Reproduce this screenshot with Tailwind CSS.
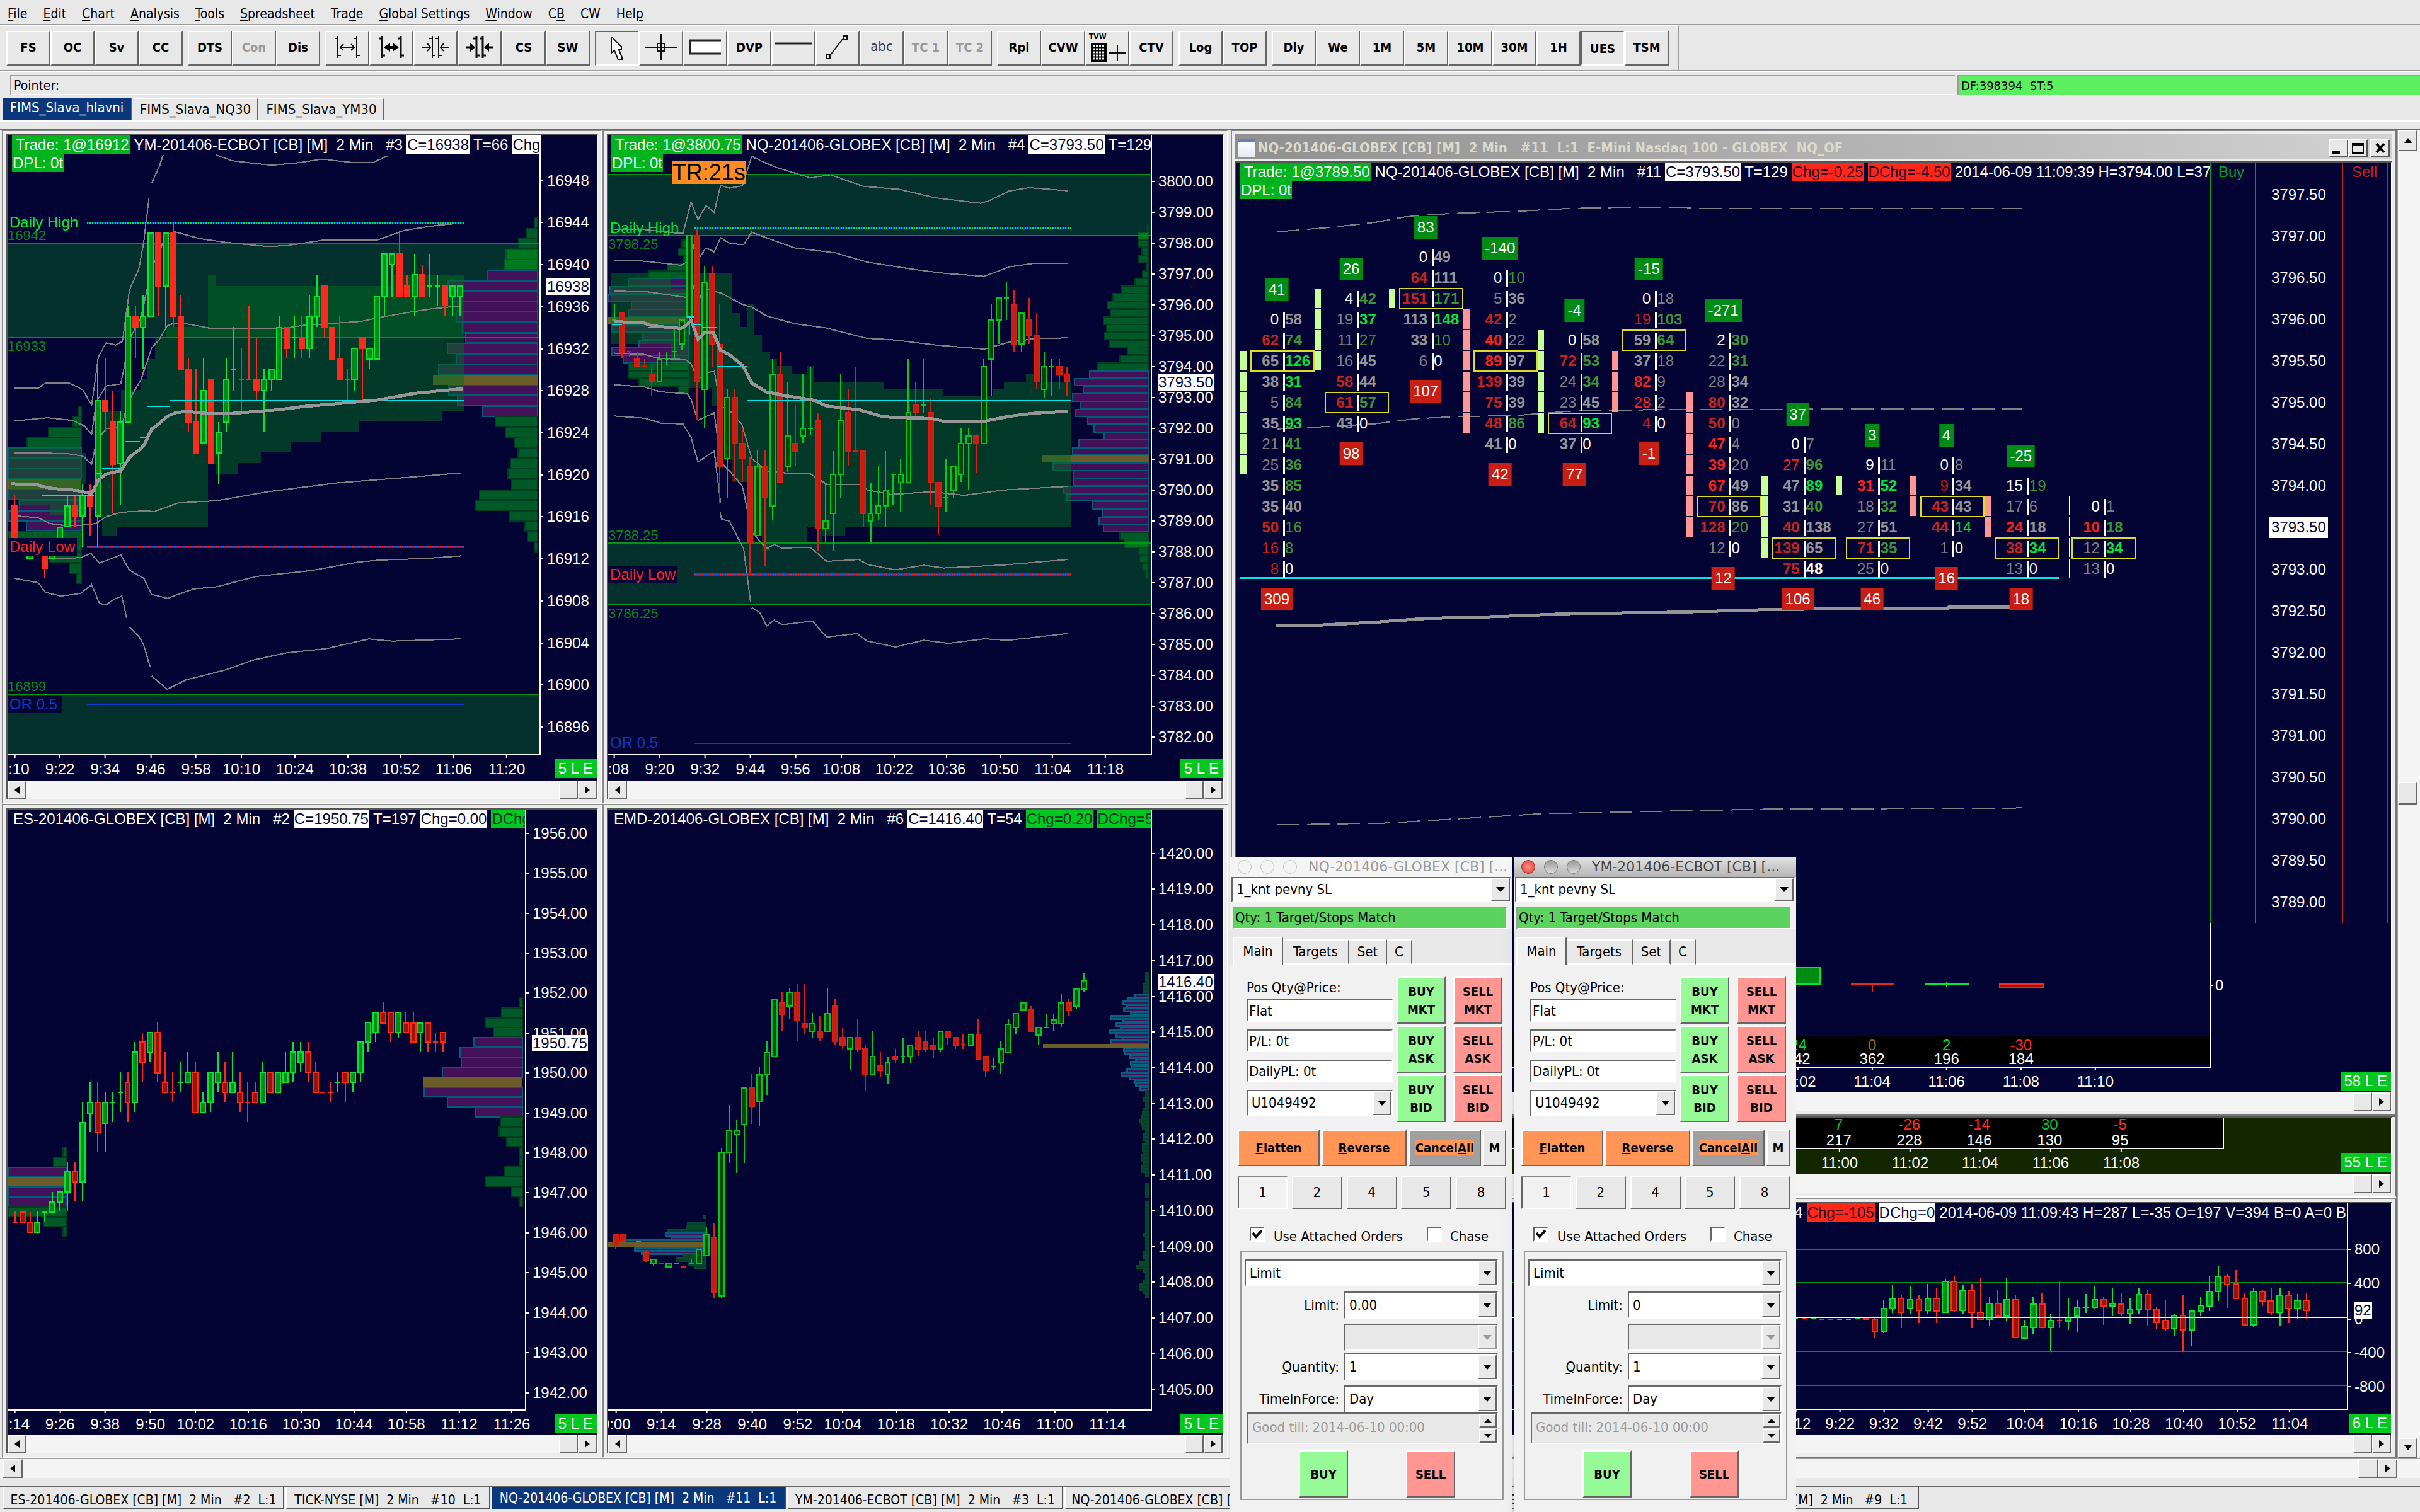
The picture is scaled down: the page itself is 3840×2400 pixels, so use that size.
<!DOCTYPE html>
<html lang="en">
<head>
  <meta charset="UTF-8">
  <meta name="viewport" content="width=device-width, initial-scale=1.0">
  <title>FIMS_Slava_hlavni</title>
  <script src="https://cdn.jsdelivr.net/npm/@tailwindcss/browser@4"></script>
</head>
<body class="relative flex min-h-screen flex-col overflow-x-hidden bg-[#e8e8e8] font-['DejaVu_Sans_Condensed','DejaVu_Sans',sans-serif] text-[22px] leading-none text-black">

  <nav class="flex h-[38px] items-center gap-[25px] px-3 pt-[6px] text-[21px]">
    <a href="#"><u>F</u>ile</a>
    <a href="#"><u>E</u>dit</a>
    <a href="#"><u>C</u>hart</a>
    <a href="#"><u>A</u>nalysis</a>
    <a href="#"><u>T</u>ools</a>
    <a href="#"><u>S</u>preadsheet</a>
    <a href="#">Tra<u>d</u>e</a>
    <a href="#"><u>G</u>lobal Settings</a>
    <a href="#"><u>W</u>indow</a>
    <a href="#">C<u>B</u></a>
    <a href="#">CW</a>
    <a href="#">Hel<u>p</u></a>
  </nav>

  <div class="border-t-2 border-b-2 border-t-[#9c9c9c] border-b-[#9c9c9c]">
    <div id="toolbar" class="flex h-[71px] w-[2664px] items-center gap-2 border-t-2 border-r-2 border-t-white border-r-[#9c9c9c] pl-[10px]"></div>
  </div>

  <div class="flex gap-1 border-t-2 border-white pt-1 pl-4">
    <div class="flex h-[32px] w-[3086px] items-center border-t-2 border-l-2 border-b-2 border-t-[#9c9c9c] border-l-[#9c9c9c] border-b-white pt-[2px] pl-1 text-[21px]">Pointer:</div>
    <div class="flex h-[32px] flex-1 items-center border-t-2 border-l-2 border-t-[#9c9c9c] border-l-[#9c9c9c] bg-[#5cf060] pl-1 text-[20px]">DF:398394&nbsp; ST:5</div>
  </div>

  <div class="mt-1 flex h-[38px] gap-[2px] border-b-2 border-white pl-1">
    <button class="w-[206px] border-r-2 border-[#666] bg-[#0b387c] pb-1 text-[22px] text-white">FIMS_Slava_hlavni</button>
    <button class="w-[198px] border-t-2 border-r-2 border-t-white border-r-[#666] text-[22px]">FIMS_Slava_NQ30</button>
    <button class="w-[198px] border-t-2 border-r-2 border-t-white border-r-[#666] text-[22px]">FIMS_Slava_YM30</button>
  </div>

  <main class="mt-[11px] grid flex-1 grid-cols-[953fr_993fr_1854fr_37fr] border-t-2 border-[#6a6a6a] pl-[3px] font-['Liberation_Sans',Arial,sans-serif] text-2xl leading-none text-white">
    <div class="grid grid-rows-[1071fr_1038fr]">
      <section id="ym" class="flex min-h-0 flex-col border-2 border-t-[#8a8a8a] border-l-[#8a8a8a] border-r-white border-b-white bg-[#ececec] p-[5px]"></section>
      <section id="es" class="flex min-h-0 flex-col border-2 border-t-[#8a8a8a] border-l-[#8a8a8a] border-r-white border-b-white bg-[#ececec] p-[5px]"></section>
    </div>
    <div class="grid grid-rows-[1071fr_1038fr]">
      <section id="nq" class="flex min-h-0 flex-col border-2 border-t-[#8a8a8a] border-l-[#8a8a8a] border-r-white border-b-white bg-[#ececec] p-[5px]"></section>
      <section id="emd" class="flex min-h-0 flex-col border-2 border-t-[#8a8a8a] border-l-[#8a8a8a] border-r-white border-b-white bg-[#ececec] p-[5px]"></section>
    </div>
    <div class="grid grid-rows-[1566fr_130fr_413fr] pl-1">
      <section id="flow" class="flex min-h-0 flex-col border-2 border-t-[#8a8a8a] border-l-[#8a8a8a] border-r-[#777] border-b-[#777] bg-[#ececec] p-[5px]">
        <header class="mb-[3px] flex h-[40px] shrink-0 items-center bg-linear-to-r from-[#909090] to-[#d2d2d2] pt-1 pr-1 pl-1 font-['DejaVu_Sans_Condensed','DejaVu_Sans',sans-serif] text-[22px] text-[#dcdacd]">
          <span class="mr-1 h-7 w-7 border-t-4 border-[#5f86b8] bg-linear-to-b from-white to-[#e4e8ee]"></span>
          <h2 class="flex-1 font-bold whitespace-pre">NQ-201406-GLOBEX [CB] [M]  2 Min   #11  L:1  E-Mini Nasdaq 100 - GLOBEX  NQ_OF</h2>
          <button aria-label="Minimize" class="flex h-[29px] w-[31px] items-end border-2 border-t-white border-l-white border-r-[#555] border-b-[#555] bg-[#e8e8e8] p-1"><span class="h-1 w-3 bg-black"></span></button>
          <button aria-label="Maximize" class="h-[29px] w-[31px] border-2 border-t-white border-l-white border-r-[#555] border-b-[#555] bg-[#e8e8e8] p-1"><span class="block h-full border-2 border-t-4 border-black"></span></button>
          <button aria-label="Close" class="ml-1 flex h-[29px] w-[31px] items-center justify-center border-2 border-t-white border-l-white border-r-[#555] border-b-[#555] bg-[#e8e8e8]"><svg class="h-4 w-4" viewBox="0 0 16 16"><path d="M2 1 L14 15 M14 1 L2 15" stroke="#000" stroke-width="4"/></svg></button>
        </header>
      </section>
      <section id="nq30" class="flex min-h-0 flex-col border-2 border-t-[#555] border-l-[#8a8a8a] border-r-[#777] border-b-white bg-[#ececec] p-[5px] pt-0"></section>
      <section id="tick" class="flex min-h-0 flex-col border-2 border-t-[#8a8a8a] border-l-[#8a8a8a] border-r-[#777] border-b-[#777] bg-[#ececec] p-[5px]"></section>
    </div>
    <div class="flex flex-col border-l-2 border-[#9c9c9c] bg-[#f4f4f4] pr-1">
      <button aria-label="Scroll up" class="flex h-[34px] items-center justify-center border-2 border-t-white border-l-white border-r-[#666] border-b-[#666] bg-[#e8e8e8]"><svg class="h-2 w-3" viewBox="0 0 12 8"><path d="M0 8 L6 0 L12 8 Z"/></svg></button>
      <div class="flex-[1000]"></div>
      <button aria-label="Scroll thumb" class="h-[36px] border-2 border-t-white border-l-white border-r-[#666] border-b-[#666] bg-[#e8e8e8]"></button>
      <div class="flex-[1005]"></div>
      <button aria-label="Scroll down" class="flex h-[32px] items-center justify-center border-2 border-t-white border-l-white border-r-[#666] border-b-[#666] bg-[#e8e8e8]"><svg class="h-2 w-3" viewBox="0 0 12 8"><path d="M0 0 L6 8 L12 0 Z"/></svg></button>
    </div>
  </main>

  <div class="flex h-[32px] border-t-2 border-[#9c9c9c] bg-[#f4f4f4] pl-1">
    <button aria-label="Scroll left" class="flex w-[32px] items-center justify-center border-2 border-t-white border-l-white border-r-[#666] border-b-[#666] bg-[#e8e8e8]"><svg class="h-3 w-2" viewBox="0 0 8 12"><path d="M8 0 L0 6 L8 12 Z"/></svg></button>
    <div class="flex-1"></div>
    <button aria-label="Scroll thumb" class="w-[31px] border-2 border-t-white border-l-white border-r-[#666] border-b-[#666] bg-[#e8e8e8]"></button>
    <button aria-label="Scroll right" class="mr-[36px] flex w-[31px] items-center justify-center border-2 border-t-white border-l-white border-r-[#666] border-b-[#666] bg-[#e8e8e8]"><svg class="h-3 w-2" viewBox="0 0 8 12"><path d="M0 0 L8 6 L0 12 Z"/></svg></button>
  </div>

  <footer class="mt-3 flex h-[42px] gap-[2px] border-t-2 border-[#666] pb-1 pl-1 text-[21px] whitespace-pre">
    <button class="w-[447px] border-r-2 border-b-2 border-l-2 border-l-white border-r-[#555] border-b-[#555] pt-2">ES-201406-GLOBEX [CB] [M]  2 Min   #2  L:1</button>
    <button class="w-[325px] border-r-2 border-b-2 border-l-2 border-l-white border-r-[#555] border-b-[#555] pt-2">TICK-NYSE [M]  2 Min   #10  L:1</button>
    <button class="w-[467px] border-r-2 border-[#555] bg-[#0b387c] text-white">NQ-201406-GLOBEX [CB] [M]  2 Min   #11  L:1</button>
    <button class="w-[438px] border-r-2 border-b-2 border-l-2 border-l-white border-r-[#555] border-b-[#555] pt-2">YM-201406-ECBOT [CB] [M]  2 Min   #3  L:1</button>
    <button class="w-[450px] border-r-2 border-b-2 border-l-2 border-l-white border-r-[#555] border-b-[#555] pt-2">NQ-201406-GLOBEX [CB] [M]  2 Min   #4  L:1</button>
    <button class="w-[582px] border-r-2 border-b-2 border-l-2 border-l-white border-r-[#555] border-b-[#555] pt-2">EMD-201406-GLOBEX [CB] [M]  2 Min   #6  L:1</button>
    <button class="w-[320px] border-r-2 border-b-2 border-l-2 border-l-white border-r-[#555] border-b-[#555] pt-2">TICK-NYSE [M]  2 Min   #9  L:1</button>
  </footer>

  <!-- Floating order entry windows -->
  <div id="orders" class="absolute bottom-0 left-[1952px] flex h-[1040px] gap-[2px] overflow-hidden"></div>

  <script>
    // ---------- toolbar ----------
    const icons = {
      wide: '<path d="M6 3V38M1 7H6M6 34H11M36 3V38M31 7H36M36 34H41M10 21H32M15 16L10 21L15 26M27 16L32 21L27 26" fill="none" stroke="#111" stroke-width="2"/>',
      wideBold: '<path d="M6 3V38M1 7H6M6 34H11M36 3V38M31 7H36M36 34H41" fill="none" stroke="#111" stroke-width="3"/><path d="M12 21H30" stroke="#000" stroke-width="4"/><path d="M9 21L19 14V28ZM33 21L23 14V28Z"/>',
      narrow: '<path d="M16 3V38M11 7H16M16 34H21M26 3V38M21 7H26M26 34H31M0 21H12M8 15L13 21L8 27M42 21H30M34 15L29 21L34 27" fill="none" stroke="#111" stroke-width="2"/>',
      narrowBold: '<path d="M16 3V38M11 7H16M16 34H21M26 3V38M21 7H26M26 34H31" fill="none" stroke="#111" stroke-width="3"/><path d="M0 21H8M34 21H42" stroke="#000" stroke-width="3"/><path d="M14 21L6 14V28ZM28 21L36 14V28Z"/>',
      pointer: '<path d="M12 3V28L17 24L23 39H29V35L24 23H28V18L14 4Z" fill="#fff" stroke="#111" stroke-width="2"/>',
      cross: '<path d="M21 0V42M-5 21H47M15 15H27V27H15Z" fill="none" stroke="#111" stroke-width="2"/>',
      box: '<path d="M46 10H-3V31H46Z" fill="#fff"/><path d="M46 10H-3V31H46" fill="none" stroke="#222" stroke-width="3"/>',
      line: '<path d="M-9 15H50" stroke="#222" stroke-width="3"/>',
      ray: '<path d="M9 34L29 8M30 3H36V9H30ZM3 33H9V39H3Z" fill="none" stroke="#111" stroke-width="2"/>',
      tpo: '<path d="M-5 10H21V40H-5Z"/><path d="M-2 15H18M-2 20H18M-2 25H18M-2 30H18M-2 35H18" stroke="#e8e8e8" stroke-width="3" stroke-dasharray="3 2"/><path d="M24 26H50M37 13V39" stroke="#111" stroke-width="2"/>'
    };
    const groups = [
      ['FS', 'OC', 'Sv', 'CC'],
      ['DTS', '-Con', 'Dis'],
      ['@wide', '@wideBold', '@narrow', '@narrowBold', 'CS', 'SW'],
      ['!@pointer', '@cross', '@box', 'DVP', '@line', '@ray', '~abc', '-TC 1', '-TC 2'],
      ['Rpl', 'CVW', '@tpo', 'CTV'],
      ['Log', 'TOP'],
      ['Dly', 'We', '1M', '5M', '10M', '30M', '1H', '!UES', 'TSM']
    ];
    const raised = 'flex h-[55px] w-[70px] flex-col items-center justify-center border-2 border-t-white border-l-white border-r-[#666] border-b-[#666] pb-1 text-xl font-bold';
    const pressed = 'flex h-[55px] w-[70px] flex-col items-center justify-center border-2 border-t-[#666] border-l-[#666] border-r-white border-b-white text-xl font-bold';

    document.getElementById('toolbar').innerHTML = groups.map(g => '<div class="flex">' + g.map(b => {
      const down = b[0] === '!';
      const t = b.replace('!', '');
      let inner;
      if (t[0] === '@') {
        const name = t.slice(1);
        inner = (name === 'tpo' ? '<span class="-mb-2 self-start pl-1 text-xs">TVW</span>' : '') +
          `<svg class="h-[42px] w-[42px] overflow-visible" viewBox="0 0 42 42">${icons[name]}</svg>`;
        return `<button aria-label="${name}" class="${down ? pressed : raised}">${inner}</button>`;
      }
      if (t[0] === '-') inner = `<span class="text-[#999]">${t.slice(1)}</span>`;
      else if (t[0] === '~') inner = `<span class="text-[22px] font-normal text-[#3c3850]">${t.slice(1)}</span>`;
      else inner = t;
      return `<button class="${down ? pressed : raised}">${inner}</button>`;
    }).join('') + '</div>').join('');

    // ---------- chart helpers ----------
    const left = (v, x) => ((x - v[0]) / v[2] * 100).toFixed(3) + '%';
    const top_ = (v, y) => ((y - v[1]) / v[3] * 100).toFixed(3) + '%';

    // each candle: side high bodyTop bodyBottom low
    function candles(x0, step, w, data, c) {
      return data.trim().split(/\s*,\s*/).map((row, i) => {
        const [side, h, a, b, l] = row.split(' ');
        const x = x0 + i * step;
        const [stroke, fill] = side === 'g' ? [c.up, c.upFill] : [c.down, c.downFill];
        const body = a === b
          ? `<path d="M${x - w / 2} ${a}H${x + w / 2}"/>`
          : `<rect x="${x - w / 2}" y="${a}" width="${w}" height="${b - a}"/>`;
        return `<g stroke="${stroke}" fill="${fill}"><path d="M${x} ${h}V${l}"/>${body}</g>`;
      }).join('');
    }

    const bars = {
      g: 'fill="#005a28" stroke="#003c20"', b: 'fill="#007820" stroke="#005a20"',
      p: 'fill="#43105a" stroke="#005c78"', o: 'fill="#6b5c2a"',
      d: 'fill="#04402a" stroke="#034a2a"', s: 'fill="#43105a" stroke="#046080" stroke-width="3"'
    };
    // volume profile: rows run downwards from y, each ends at the right edge
    function profile(right, y, h, rows) {
      return rows.trim().split(' ').map((r, i) => {
        if (r === '-') return '';
        const x = +r.slice(1);
        return `<rect x="${x}" y="${y + i * h}" width="${right - x}" height="${h - 1}" ${bars[r[0]]}/>`;
      }).join('');
    }
    const curve = (...pts) => pts.map(p => `<polyline points="${p}" fill="none" stroke="#808080"/>`).join('');
    const vwap = p => `<polyline points="${p}" fill="none" stroke="#969696" stroke-width="5"/>`;
    const zone = (v, y, h) => `<rect x="${v[0]}" y="${y}" width="${v[2]}" height="${h}" fill="#04302e"/>`;
    const hline = (v, y, col) => `<path d="M${v[0]} ${y}H${v[0] + v[2]}" stroke="${col}"/>`;
    const cyan = segs => segs.map(s => `<path d="M${s[0]} ${s[2]}H${s[1]}" stroke="#00e6e6"/>`).join('');
    const daily = (x1, x2, y, dot) => `<path d="M${x1} ${y}H${x2}" stroke="#0a46dc" stroke-width="4"/><path d="M${x1} ${y + 1}H${x2}" stroke="${dot}" stroke-dasharray="2 2"/>`;

    const svg = (v, inner) => `<svg class="absolute inset-0 h-full w-full [&_*]:[vector-effect:non-scaling-stroke]" viewBox="${v.join(' ')}" preserveAspectRatio="none" stroke-width="2" shape-rendering="crispEdges">${inner}</svg>`;
    const note = (v, x, y, cls, t) => `<span class="absolute -translate-y-1/2 whitespace-pre ${cls}" style="left:${left(v, x)};top:${top_(v, y)}">${t}</span>`;

    const tag = {
      trade: 'bg-[#00b41e] pl-[6px] pr-px mr-px', white: 'bg-white px-px text-[#040434]', red: 'bg-[#ff2818] px-px text-[#28001e]',
      green: 'bg-[#00c81e] px-px text-[#00321e]', plain: ''
    };
    const heading = items => '<div class="flex h-[29px] items-center gap-[6px] whitespace-pre">' +
      items.map(([k, t]) => `<span class="flex h-[29px] shrink-0 items-center ${tag[k]}">${t}</span>`).join('') + '</div>';

    const priceLabels = (v, list) => list.map(([y, t]) =>
      `<div class="absolute left-0 flex -translate-y-1/2 items-center gap-[6px]" style="top:${top_(v, y)}"><span class="h-[2px] w-1 bg-white"></span>${t}</div>`).join('');
    const scale = (hi, lo, step, y1, y2, dec) => {
      const out = [];
      for (let p = hi; p >= lo; p -= step) out.push([y1 + (hi - p) / (hi - lo) * (y2 - y1), p.toFixed(dec)]);
      return out;
    };
    const timeLabels = (v, list) => list.map(([x, t]) =>
      `<div class="absolute top-0 flex -translate-x-1/2 flex-col items-center gap-[6px]" style="left:${left(v, x)}"><span class="h-1 w-[2px] bg-white"></span>${t}</div>`).join('');

    const scrollbar = `
      <div class="flex h-[30px] shrink-0 bg-[#f4f4f4]">
        <button aria-label="Scroll left" class="flex w-[30px] items-center justify-center border-2 border-t-white border-l-white border-r-[#666] border-b-[#666] bg-[#e8e8e8]"><svg class="h-3 w-2" viewBox="0 0 8 12"><path d="M8 0 L0 6 L8 12 Z"/></svg></button>
        <div class="flex-1"></div>
        <button aria-label="Scroll thumb" class="w-[30px] border-2 border-t-white border-l-white border-r-[#666] border-b-[#666] bg-[#e8e8e8]"></button>
        <button aria-label="Scroll right" class="flex w-[30px] items-center justify-center border-2 border-t-white border-l-white border-r-[#666] border-b-[#666] bg-[#e8e8e8]"><svg class="h-3 w-2" viewBox="0 0 8 12"><path d="M0 0 L8 6 L0 12 Z"/></svg></button>
      </div>`;

    function mount(id, o) {
      const v = o.view;
      document.getElementById(id).insertAdjacentHTML('beforeend', `
        <div class="flex min-h-0 flex-1 flex-col border-2 border-t-[#555] border-l-[#555] border-r-white border-b-0">
          <div class="grid min-h-0 flex-1 overflow-hidden ${o.cols} ${o.bg || 'bg-[#040434]'}">
            <div class="relative overflow-hidden border-b-2 border-white ${o.noRight ? '' : 'border-r-2'}">
              ${svg(v, o.draw)}
              ${o.notes || ''}
              <div class="relative ${o.headPad || 'pl-[7px]'}">${o.head || ''}</div>
            </div>
            <div class="relative">${o.axis || priceLabels(v, o.prices)}
              ${o.last ? `<span class="absolute left-[9px] -translate-y-1/2 bg-white px-px py-px text-[#040434]" style="top:${top_(v, o.last[0])}">${o.last[1]}</span>` : ''}
            </div>
            <div class="relative">${timeLabels(v, o.times)}</div>
            <div class="flex items-start justify-end pt-[6px]"><span class="flex h-[30px] items-center bg-[#00c81e] px-[6px]">${o.badge}</span></div>
          </div>
          ${scrollbar}
        </div>`);
    }

    // ---------- YM ----------
    const ymView = [22, 33, 1366, 1388];
    mount('ym', {
      view: ymView, cols: 'grid-cols-[1fr_89px] grid-rows-[1fr_40px]', badge: '5 L E',
      head: heading([['trade', 'Trade: 1@16912'], ['plain', 'YM-201406-ECBOT [CB] [M]  2 Min   #3'], ['white', 'C=16938'], ['plain', 'T=66'], ['white', 'Chg=6']]) +
        heading([['trade', '<span class="-ml-[5px]">DPL: 0t</span>']]),
      draw: zone(ymView, 275, 212) + zone(ymView, 1286, 140) +
        profile(1383, 218, 23.45, 'g1375 g1356 g1334 b1302 b1297 p1255 p1154 p1160 p1178 p1175 p1191 p1199 p1152 p1175 p1129 o1115 p1155 p1178 p1242 g1275 g1301 g1323 g1333 g1314 g1307 g1317 g1234 g1223 g1311 g1350 g1358 g1375') +
        profile(212, 640, 23.45, 'g205 g190 g128 g72 p24 p24 p24 o24 p24 p52 p24 p70 g24 g110 g130 g180 g198') +
        '<path fill="#006e1e" fill-opacity=".5" d="M30 720H212V815H225V745H212V720ZM26 733H212V885H130V862H50V850H26ZM265 932V650H313V604H363V580H381V534H400V487H430V462H537V345H556V370H1010V345H1196V650H1138V675H925V698H828V720H750V743H672V768H614V791H556V770H537V910H304V932Z"/>' +
        hline(ymView, 275, '#00960f') + hline(ymView, 487, '#00960f') + hline(ymView, 1286, '#00960f') +
        curve('40,600 100,600 120,588 180,588 215,603 238,638 255,530 275,498 300,503 317,495 335,380 360,330 372,270 385,175', '392,140 413,100 422,76', '556,76 600,90 700,100 770,94 830,86 900,93 960,94 1000,78',
          '40,673 125,666 190,672 220,685 238,703 250,630 275,595 313,590 335,490 365,440 392,330 410,295 432,255 450,249 520,265 585,273 690,282 740,280 830,268 970,268 1040,246 1130,234 1185,230',
          '40,745 170,746 215,752 238,770 250,720 275,690 313,688 335,625 365,580 392,510 412,490 432,460 450,454 480,455 540,465 600,467 720,467 780,459 930,450 985,440 1050,430 1110,422 1185,415',
          '40,886 100,890 130,903 170,908 215,907 250,903 275,888 313,878 370,875 400,876 460,857 560,852 690,832 870,812 1060,799 1185,790',
          '120,982 210,980 236,970 258,992 313,974 335,1008 372,1026 392,1062 432,1071 500,1050 560,1045 660,1022 800,1009 920,990 980,985 1090,982 1185,976',
          '40,1026 100,1036 120,1058 160,1066 210,1060 238,1040 258,1082 275,1086 295,1073 315,1066 328,1115', '335,1135 360,1157 372,1176 388,1225', '392,1245 432,1275 480,1254 580,1232 650,1210 740,1193 840,1184 950,1162 1010,1167 1185,1162') +
        daily(226, 1196, 229, '#00e632') + daily(226, 1196, 955, '#ff2020') +
        '<path d="M226 1309H1196" stroke="#0a3cd2"/>' +
        candles(40, 19.4, 13, 'r 840 863 935 935,g 940 950 970 977,g 950 960 982 982,r 950 960 970 975,r 950 955 1003 1025,g 940 950 982 982,g 912 912 960 960,g 840 863 910 910,r 840 863 886 910,g 815 840 886 955,r 815 840 863 932,g 555 628 886 955,r 533 628 652 697,r 605 675 770 880,g 650 676 769 862,g 415 439 676 676,r 415 439 464 533,g 392 439 464 557,g 252 252 439 439,r 252 252 371 437,g 252 252 371 465,r 230 252 439 462,r 392 439 557 557,r 533 558 676 697,r 557 676 745 745,g 533 605 722 722,r 580 580 769 769,g 676 699 745 814,g 533 580 676 697,g 462 558 558 605,r 509 580 580 652,r 415 580 580 580,r 486 580 605 628,g 557 580 605 697,g 558 558 580 605,g 439 464 580 580,r 464 464 510 533,g 439 486 486 533,r 439 486 510 533,g 392 439 510 533,g 345 394 439 462,r 371 371 464 486,r 464 464 534 534,r 439 534 580 580,r 557 580 580 628,g 510 510 580 605,r 486 486 510 628,g 510 510 535 557,g 394 394 535 535,g 299 299 394 439,g 299 299 323 394,r 252 299 394 394,r 345 371 394 394,g 299 345 394 437,r 323 345 394 394,g 299 371 371 394,g 345 371 371 415,r 371 371 415 437,g 371 371 394 437,g 371 371 394 437',
          { up: '#00e632', upFill: '#008c14', down: '#ff2a1e', downFill: '#ff2a1e' }) +
        cyan([[32, 52, 815], [110, 244, 840], [248, 265, 792], [265, 313, 781], [323, 362, 720], [362, 380, 710], [382, 440, 640], [440, 1196, 628]]) +
        vwap('32,814 100,816 110,820 140,825 200,829 238,836 255,806 275,792 313,785 335,755 360,738 372,728 392,692 410,680 432,663 455,654 485,652 545,657 585,657 720,648 780,641 900,632 975,626 1070,611 1130,606 1190,601'),
      notes: note(ymView, 22, 258, 'text-[22px] text-[#008c14]', '16942') + note(ymView, 22, 506, 'text-[22px] text-[#008c14]', '16933') + note(ymView, 22, 1269, 'text-[22px] text-[#008c14]', '16899') +
        note(ymView, 22, 229, 'bg-[#040434] px-[3px] pb-[2px] text-[#00e632]', 'Daily High') + note(ymView, 22, 955, 'bg-[#040434] px-[3px] py-[2px] text-[#ff2020]', 'Daily Low') +
        note(ymView, 22, 1308, 'bg-[#040434] py-[2px] pr-2 pl-[3px] text-[#0a3cc8]', 'OR 0.5'),
      prices: scale(16948, 16896, 4, 134, 1357, 0), last: [371, '16938'],
      times: [[40, '9:10'], [156, '9:22'], [272, '9:34'], [389, '9:46'], [505, '9:58'], [621, '10:10'], [758, '10:24'], [894, '10:38'], [1030, '10:52'], [1165, '11:06'], [1301, '11:20']]
    });

    // ---------- NQ ----------
    const dark = { up: '#00c81e', upFill: '#004b00', down: '#dc1e12', downFill: '#c81e0f' };
    const nqView = [20, 33, 1341, 1388];
    mount('nq', {
      view: nqView, cols: 'grid-cols-[1fr_112px] grid-rows-[1fr_40px]', badge: '5 L E', headPad: 'pl-[5px]',
      head: heading([['trade', 'Trade: 1@3800.75'], ['plain', 'NQ-201406-GLOBEX [CB] [M]  2 Min   #4'], ['white', 'C=3793.50'], ['plain', 'T=129']]) +
        heading([['trade', '<span class="-ml-[5px]">DPL: 0t</span>']]),
      draw: zone(nqView, 120, 138) + zone(nqView, 947, 139) +
        profile(1356, 233, 17.25, 'g1350 b1332 g1332 g1339 g1332 g1350 g1340 g1322 g1290 g1267 g1254 g1262 g1244 g1252 g1247 g1259 g1303 g1284 g1229 p1210 p1172 p1194 p1168 p1188 p1175 p1206 p1221 p1246 p1184 p1168 o1093 p1119 p1170 p1170 p1145 p1154 p1216 p1241 p1234 p1244 g1284 b1297 g1330 g1333 g1341 g1349') +
        profile(218, 268, 17.25, 'g202 g195 g205 g166 g122 p70 p24 p22 p77 p70 o20 p30 p106 p97 p30 p58 g70 g70 g96 g195') +
        '<path fill="#006e1e" fill-opacity=".5" d="M28 343H176V378H218V560H176V500H28ZM218 560V343H325V431H345V462H363V412H381V480H400V518H420V535H438V550H475V568H512V550H530V585H700V602H848V618H970V602H998V585H1053V568H1072V585H1164V912H605V930H550V945H540V912H512V947H420V965H400V930H363V810H325V758H306V640H275V600H218Z"/>' +
        hline(nqView, 120, '#00960f') + hline(nqView, 258, '#00960f') + hline(nqView, 947, '#00960f') + hline(nqView, 1086, '#00960f') +
        curve('35,243 110,244 190,252 205,252 225,182 242,222 262,190 282,206 298,145 320,151 352,146 375,80 410,95 440,106 520,128 570,121 650,147 740,154 830,173 940,185 960,180 1010,158 1060,150 1155,157',
          '35,312 110,315 200,324 212,318 225,266 242,312 262,285 282,294 298,262 320,275 355,278 375,250 410,262 480,285 580,296 660,317 780,334 850,342 950,349 1010,328 1070,320 1155,320',
          '35,382 120,384 212,396 225,358 242,402 262,378 300,387 352,412 375,418 410,437 480,455 560,465 660,488 720,491 830,503 950,512 1010,497 1080,488 1155,487',
          '35,521 110,524 140,532 212,536 225,545 242,580 262,565 282,562 298,640 320,650 350,680 375,757 410,785 460,790 520,792 560,815 640,815 660,828 720,838 820,832 900,840 1000,828 1155,820',
          '35,592 110,597 150,608 215,612 225,625 242,672 282,655 298,765 320,785 352,820 375,922 412,960 430,950 450,958 520,957 560,988 640,984 660,995 730,1007 800,997 850,1003 1000,996 1155,984',
          '35,662 110,667 150,678 205,680 225,710 242,765 282,741 298,857', '297,878 300,893 320,898 355,960 372,1080', '375,1092 395,1103 412,1133 430,1120 450,1130 525,1122 560,1158 635,1150 660,1167 730,1180 800,1165 860,1172 950,1162 1010,1165 1155,1150') +
        daily(233, 1164, 240, '#00e632') + daily(233, 1164, 1017, '#ff2020') +
        '<path d="M233 1396H1164" stroke="#0a3cd2"/>' +
        candles(35, 18.64, 12, 'g 412 447 447 450,r 431 431 519 532,r 518 518 518 530,r 518 535 552 552,r 535 552 552 552,r 552 568 586 618,g 518 535 586 586,g 518 535 535 548,g 465 518 518 535,g 447 447 500 515,g 258 258 440 480,r 242 258 586 670,g 325 362 603 688,r 325 343 500 552,r 412 502 775 857,g 602 620 758 845,r 602 620 724 808,r 690 724 758 810,r 755 775 947 1015,g 740 775 930 930,r 740 775 846 998,g 535 569 863 895,r 518 569 812 812,g 585 707 775 788,r 637 724 741 773,g 568 690 707 722,g 552 690 690 706,r 655 672 914 965,g 815 897 914 945,g 741 793 880 965,g 568 672 793 845,r 602 655 741 775,r 552 741 741 741,r 741 741 880 912,g 812 880 897 945,g 775 863 880 895,g 741 829 863 912,g 793 793 793 862,g 758 793 812 878,g 535 655 812 812,r 585 637 655 672,g 535 637 637 655,r 620 655 812 862,r 812 812 863 928,g 758 846 846 878,g 775 775 829 845,g 690 724 793 810,g 690 707 724 828,r 707 707 724 790,g 535 552 724 724,g 412 447 535 618,g 397 397 447 500,g 362 397 397 447,r 380 412 500 518,g 431 431 500 518,r 397 447 482 500,r 431 482 586 602,g 518 552 603 620,g 535 552 552 618,r 535 552 569 602,r 552 569 586 618', dark) +
        cyan([[30, 55, 457], [120, 130, 464], [215, 232, 440], [233, 250, 457], [252, 288, 464], [290, 362, 552], [364, 1164, 628]]) +
        vwap('35,450 110,454 130,460 200,466 212,460 225,447 242,490 258,475 280,475 298,515 320,525 352,548 375,588 410,608 460,617 530,627 560,640 640,648 700,664 820,668 850,674 950,674 1010,663 1080,655 1155,652'),
      notes: note(nqView, 20, 277, 'text-[22px] text-[#008c14]', '3798.25') + note(nqView, 20, 930, 'text-[22px] text-[#008c14]', '3788.25') + note(nqView, 20, 1105, 'text-[22px] text-[#008c14]', '3786.25') +
        note(nqView, 20, 240, 'px-[3px] text-[#00e632]', 'Daily High') + note(nqView, 20, 1017, 'bg-[#040434] px-[3px] py-[2px] text-[#ff2020]', 'Daily Low') +
        note(nqView, 20, 1395, 'pl-[3px] text-[#0a3cc8]', 'OR 0.5') +
        note(nqView, 177, 117, 'bg-[#ff8c1e] px-px text-4xl leading-none text-black', 'TR:21s'),
      prices: scale(3800, 3782, 1, 136, 1380, 2), last: [586, '3793.50'],
      times: [[35, '9:08'], [147, '9:20'], [259, '9:32'], [371, '9:44'], [482, '9:56'], [595, '10:08'], [725, '10:22'], [855, '10:36'], [986, '10:50'], [1116, '11:04'], [1246, '11:18']]
    });

    // ---------- ES ----------
    const bright = { up: '#00e632', upFill: '#008c14', down: '#ff2a14', downFill: '#961408' };
    const esView = [15, 33, 1336, 1308];
    mount('es', {
      view: esView, cols: 'grid-cols-[1fr_112px] grid-rows-[1fr_38px]', badge: '5 L E', headPad: 'pl-[9px]',
      head: heading([['plain', 'ES-201406-GLOBEX [CB] [M]  2 Min   #2'], ['white', 'C=1950.75'], ['plain', 'T=197'], ['white', 'Chg=0.00'], ['green', 'DChg=1.50']]),
      draw: profile(1344, 444, 21.7, 'g1337 g1291 g1249 g1269 p1219 p1184 p1187 p1138 o1087 p1090 p1151 p1223 g1287 g1285 g1304 g1337 g1337 g1297 g1249 g1317 g1337') +
        profile(166, 770, 21.7, 'g159 g134 p17 o17 p17 p17 g17 g108 g159') +
        candles(34, 19.4, 13, 'r 910 933 933 933,r 912 912 934 934,r 912 934 955 955,g 910 934 955 955,g 912 912 912 933,g 868 890 912 912,g 868 868 890 910,g 802 824 868 910,r 802 824 846 888,g 672 716 846 888,g 628 672 695 737,r 628 672 738 781,g 650 672 717 781,g 650 672 672 715,g 605 650 650 693,r 605 628 672 715,g 540 562 672 693,r 520 540 585 628,g 520 520 563 583,r 498 520 607 628,r 562 628 650 650,r 605 650 650 672,g 583 628 628 650,g 562 606 628 628,r 583 606 694 694,g 650 672 694 694,g 606 606 672 693,g 562 606 628 650,r 583 628 650 672,g 562 628 650 650,r 605 650 672 693,r 628 672 672 715,r 628 650 672 672,g 583 606 672 672,r 606 606 650 650,g 606 606 650 650,g 562 606 628 628,g 540 562 606 628,g 540 562 584 605,r 540 562 606 628,r 583 606 650 650,r 650 650 650 650,r 628 650 650 672,g 606 628 628 650,r 606 606 628 672,g 606 606 628 650,g 540 540 606 628,g 498 498 540 562,g 476 476 520 540,r 454 476 499 499,r 476 476 520 540,g 476 476 520 532,r 476 499 520 520,r 476 499 540 540,g 499 499 520 562,r 499 499 540 562,r 520 540 540 562,r 520 520 540 562', bright),
      prices: scale(1956, 1942, 1, 84, 1302, 2), last: [541, '1950.75'],
      times: [[34, '9:14'], [150, '9:26'], [266, '9:38'], [383, '9:50'], [499, '10:02'], [635, '10:16'], [771, '10:30'], [907, '10:44'], [1042, '10:58'], [1178, '11:12'], [1314, '11:26']]
    });

    // ---------- EMD ----------
    const emdView = [22, 33, 1340, 1310];
    mount('emd', {
      view: emdView, cols: 'grid-cols-[1fr_112px] grid-rows-[1fr_38px]', badge: '5 L E', headPad: 'pl-[9px]',
      head: heading([['plain', 'EMD-201406-GLOBEX [CB] [M]  2 Min   #6'], ['white', 'C=1416.40'], ['plain', 'T=54'], ['green', 'Chg=0.20'], ['green', 'DChg=5.10']]),
      draw: profile(1357, 390, 7.8, 'd1349 d1349 d1349 d1345 d1343 d1343 s1323 s1305 s1293 s1304 s1296 s1313 s1265 s1292 s1277 s1288 s1262 s1277 s1292 s1265 o1096 s1296 s1298 s1312 s1326 s1313 s1315 s1303 s1290 s1312 s1322 s1326 s1337 d1350 d1350 d1345 d1350 d1350 d1345 d1342 d1340 d1334 d1340 d1342 d1350 d1345 d1345 d1350 d1341 d1341 d1345 d1339 d1339 d1345 d1339 d1339 d1350 - - d1350 d1350 d1350 d1350 - d1350 d1350 d1350 d1350 d1350 d1350 d1350 d1350 d1350 d1345 d1350 d1350 d1350 d1350 d1345 d1345 d1350 d1334 d1328 d1344 d1350 d1350 d1344 d1336 d1336 d1345 d1350') +
        profile(262, 920, 7.8, 'd257 - d218 d215 d169 s166 s178 s50 o24 s88 s105 d208 d191 d220 d237') +
        '<rect x="1096" y="545" width="261" height="8" fill="#6b5c2a"/><rect x="22" y="979" width="240" height="9" fill="#6b5c2a"/>' +
        candles(41, 18.65, 12, 'r 961 961 986 992,r 961 961 978 978,r 986 986 986 986,g 978 978 978 978,r 995 1001 1017 1022,g 1016 1016 1024 1031,r 1024 1024 1024 1024,g 1024 1024 1032 1032,g 1024 1024 1024 1024,r 1032 1032 1032 1032,g 1015 1024 1024 1024,g 994 994 1024 1024,g 946 961 1008 1008,r 938 968 1087 1100,g 773 782 1096 1100,g 679 735 782 806,g 712 735 744 828,g 642 642 721 806,r 611 642 681 720,g 595 611 672 726,g 540 565 611 657,g 447 447 573 573,r 432 455 480 517,g 424 432 463 492,r 415 432 493 539,r 415 501 510 524,g 478 501 517 531,r 484 517 532 539,g 424 479 517 517,r 447 463 540 547,r 510 532 548 556,g 532 532 556 601,r 492 532 556 563,r 548 556 611 649,g 517 573 611 611,r 563 594 603 618,g 572 587 611 632,r 556 572 578 586,g 532 573 573 586,g 548 548 573 586,r 517 532 556 571,r 517 540 556 563,r 532 548 556 577,g 517 517 556 563,r 517 517 532 548,r 532 532 548 556,r 524 547 547 556,g 524 524 548 548,r 492 524 578 578,r 573 573 603 618,g 577 595 595 601,g 540 556 587 611,g 492 502 565 565,g 479 479 510 524,g 455 455 471 471,r 463 471 517 517,g 510 510 526 547,g 479 510 510 510,g 479 493 501 517,g 437 455 501 508,r 447 455 471 484,g 425 425 463 470,g 390 408 425 431', dark),
      prices: scale(1420, 1405, 1, 128, 1297, 2), last: [409, '1416.40'],
      times: [[41, '9:00'], [153, '9:14'], [265, '9:28'], [377, '9:40'], [489, '9:52'], [600, '10:04'], [731, '10:18'], [862, '10:32'], [992, '10:46'], [1122, '11:00'], [1252, '11:14']]
    });

    // ---------- NQ order flow ----------
    const ink = {
      w: 'text-white', W: 'text-white font-bold', a: 'text-[#808080]', A: 'text-[#969696] font-bold',
      r: 'text-[#c81e14]', R: 'text-[#c8231b] font-bold', x: 'text-[#ff2018]', X: 'text-[#ff2018] font-bold',
      g: 'text-[#3c9632]', G: 'text-[#3c9632] font-bold', n: 'text-[#00e632]', N: 'text-[#00e632] font-bold'
    };
    // divider x, first row, bid|ask cells, POC row, delta above, total below, side bar [colour, from, to]
    const flow = [
      [2037, 6, '0w|58A 62R|74G 65A|126N 38A|31N 5a|84G 35A|93N 21a|41G 25a|36G 35A|85G 35A|40A 50R|16g 16r|8g 8r|0w', 8, '41', '309', ['g', 8, 13]],
      [2155, 5, '4w|42G 19a|37N 11a|27g 16a|45A 58R|44A 61R|57G 43A|0w', 10, '26', '98', ['g', 5, 8]],
      [2273, 3, '0w|49A 64R|111A 151R|171G 113A|148N 33A|10g 6a|0w', 5, '83', '107', ['g', 5, 5]],
      [2391, 4, '0w|10g 5a|36A 42R|2a 40X|22a 89X|97A 139R|39A 75R|39A 48R|86G 41A|0w', 8, '-140', '42', ['r', 6, 11]],
      [2509, 7, '0w|58A 72R|53G 24a|34G 23a|45A 64R|93N 37A|0w', 11, '-4', '77', ['g', 7, 11]],
      [2627, 5, '0w|18a 19r|103G 59A|64G 37A|18a 82X|9a 28x|2a 4r|0w', 7, '-15', '-1', ['r', 8, 10]],
      [2745, 7, '2w|30G 22a|31G 28a|34A 80R|32A 50R|0a 47X|4a 39X|20a 67X|49A 70R|86A 128R|20g 12a|0w', 15, '-271', '12', ['r', 10, 16]],
      [2863, 12, '0w|7a 27x|96G 47A|89N 31A|40G 40R|138A 139R|65A 75R|48W', 17, '37', '106', ['g', 14, 17]],
      [2981, 13, '9w|11a 31X|52N 18a|32G 27a|51A 71R|35G 25a|0w', 17, '3', '46', ['g', 14, 14]],
      [3099, 13, '0w|8a 9r|34A 43R|43A 44R|14n 1a|0w', 15, '4', '16', ['r', 14, 15]],
      [3217, 14, '15w|19g 17a|6a 24X|18A 38R|34N 13a|0w', 17, '-25', '18', ['r', 15, 16]],
      [3339, 15, '0w|1a 10X|18G 12a|34N 13a|0w', 17, '', '', ['w', 15, 18]]
    ];
    const fv = [1962, 256, 1543, 1436];
    const rowY = r => 307 + r * 33;
    let flowShapes = '', flowText = '';
    flow.forEach(([x, start, cells, poc, delta, total, bar]) => {
      const list = cells.split(' ');
      list.forEach((c, i) => {
        const [b, a] = c.split('|');
        const y = rowY(start + i);
        flowShapes += `<path d="M${x} ${y - 12}V${y + 14}" stroke="#fff" stroke-width="3"/>`;
        flowText += `<div class="absolute grid w-[110px] -translate-x-1/2 -translate-y-1/2 grid-cols-2 gap-[14px]" style="left:${left(fv, x - 1)};top:${top_(fv, y)}"><span class="text-right ${ink[b.slice(-1)]}">${b.slice(0, -1)}</span><span class="-ml-1 ${ink[a.slice(-1)]}">${a.slice(0, -1)}</span></div>`;
      });
      flowShapes += `<rect x="${x - 52}" y="${rowY(poc) - 16}" width="100" height="32" fill="none" stroke="#dcdc28"/>`;
      for (let r = bar[1]; r <= bar[2]; r++) {
        flowShapes += bar[0] === 'w'
          ? `<path d="M${x - 56} ${rowY(r) - 16}V${rowY(r) + 14}" stroke="#fff"/>`
          : `<rect x="${x - 69}" y="${rowY(r) - 16}" width="10" height="31" fill="${bar[0] === 'g' ? '#c8ff96' : '#ff9696'}"/>`;
      }
      if (delta) flowText += `<span class="absolute flex h-9 -translate-x-1/2 -translate-y-1/2 items-center bg-[#008c14] px-[5px]" style="left:${left(fv, x - 11)};top:${top_(fv, rowY(start) - 47)}">${delta}</span>`;
      if (total) flowText += `<span class="absolute flex h-9 -translate-x-1/2 -translate-y-1/2 items-center bg-[#c81e14] px-[5px]" style="left:${left(fv, x - 11)};top:${top_(fv, rowY(start + list.length - 1) + 48)}">${total}</span>`;
    });
    const mid = (v, x, y, cls, t) => note(v, x, y, '-translate-x-1/2 ' + cls, t);

    mount('flow', {
      view: fv, cols: 'grid-cols-[1fr_288px] grid-rows-[1fr_39px]', badge: '58 L E', noRight: true, headPad: 'pl-[6px]',
      head: heading([['trade', 'Trade: 1@3789.50'], ['plain', 'NQ-201406-GLOBEX [CB] [M]  2 Min   #11'], ['white', 'C=3793.50'], ['plain', 'T=129'], ['red', 'Chg=-0.25'], ['red', 'DChg=-4.50'], ['plain', '2014-06-09 11:09:39 H=3794.00 L=3793.00']]) +
        heading([['trade', '<span class="-ml-[5px]">DPL: 0t</span>']]),
      draw: '<g fill="none" stroke="#808080" stroke-dasharray="36 12"><polyline points="2026,366 2064,363 2111,359 2182,351 2231,342 2300,337 2414,333 2488,329 2581,327 2671,327 2692,329 3208,329"/><polyline points="2026,679 2111,675 2182,671 2244,663 2300,660 2414,657 2488,651 2570,649 2700,648 3208,647"/><polyline points="2026,1308 2200,1305 2450,1290 2800,1283 3208,1281"/></g>' +
        vwap('2024,992 2088,991 2182,986 2264,980 2380,977 2500,972 2620,971 2740,968 2800,966 2900,965 3090,964 3092,962 3210,962') +
        '<path d="M1968 916H3266" stroke="#00e6e6" stroke-width="3"/>' + flowShapes +
        '<rect x="1962" y="1644" width="1543" height="44" fill="#000"/>' +
        '<rect x="2818" y="1535" width="69" height="26" fill="#008c14" stroke="#00e632"/><path d="M2936 1561H3005M2970 1561V1574" stroke="#e6281e"/><path d="M3054 1561H3123M3088 1558V1565" stroke="#00e632"/><rect x="3172" y="1561" width="69" height="6" fill="#961408" stroke="#ff2a14"/>',
      notes: flowText +
        mid(fv, 2853, 1658, 'text-[#00dc32]', '24') + mid(fv, 2970, 1658, 'text-[#8c6e14]', '0') + mid(fv, 3088, 1658, 'text-[#00dc32]', '2') + mid(fv, 3206, 1658, 'text-[#ff2a1e]', '-30') +
        mid(fv, 2852, 1680, '', '342') + mid(fv, 2970, 1680, '', '362') + mid(fv, 3088, 1680, '', '196') + mid(fv, 3206, 1680, '', '184'),
      axis: '<div class="absolute inset-x-0 top-0 grid h-[84%] grid-cols-[74px_136px_1fr] pr-[4px]"><div class="border-x-2 border-[#00a01e] pt-[3px] pl-[12px] text-[#00a01e]">Buy</div><div></div><div class="border-x-2 border-[#c81e14] pt-[3px] pl-[14px] text-[#c81e14]">Sell</div></div>' +
        '<div class="absolute bottom-0 left-0 h-[16%] w-[2px] bg-white"></div>' +
        `<div class="absolute left-0 flex -translate-y-1/2 items-center gap-[3px]" style="top:${top_(fv, 1561)}"><span class="h-[2px] w-[6px] bg-white"></span>0</div>` +
        scale(3797.5, 3789, 0.5, 307, 1429, 2).map(([y, t]) => `<span class="absolute left-[95px] -translate-y-1/2 px-[3px] py-[5px] ${t === '3793.50' ? 'bg-white text-[#040434]' : ''}" style="top:${top_(fv, y)}">${t}</span>`).join(''),
      times: [[2852, '11:02'], [2970, '11:04'], [3088, '11:06'], [3206, '11:08'], [3324, '11:10']]
    });

    // ---------- NQ30 strip ----------
    const sv = [1962, 1772, 1567, 50];
    const cols30 = [[2919, '7', '217', '11:00', 'text-[#00c832]'], [3031, '-26', '228', '11:02', 'text-[#ff2a1e]'], [3142, '-14', '146', '11:04', 'text-[#ff2a1e]'], [3254, '30', '130', '11:06', 'text-[#00c832]'], [3366, '-5', '95', '11:08', 'text-[#ff2a1e]']];
    mount('nq30', {
      view: sv, cols: 'grid-cols-[1fr_265px] grid-rows-[1fr_40px]', badge: '55 L E', bg: 'bg-[#142600]',
      draw: '<rect x="1962" y="1772" width="1567" height="50" fill="#000"/>',
      notes: cols30.map(c => mid(sv, c[0], 1782, c[4], c[1]) + mid(sv, c[0], 1809, '', c[2])).join(''),
      prices: [], times: cols30.map(c => [c[0], c[3]])
    });

    // ---------- TICK ----------
    const tv = [-1349, 758, 2739, 534];
    mount('tick', {
      view: tv, cols: 'grid-cols-[1fr_68px] grid-rows-[1fr_39px]', badge: '6 L E', headPad: 'pl-[471px]',
      head: heading([['plain', 'TICK-NYSE [M]  2 Min   #9'], ['white', 'C=92'], ['plain', 'T=394'], ['red', 'Chg=-105'], ['white', 'DChg=0'], ['plain', '2014-06-09 11:09:43 H=287 L=-35 O=197 V=394 B=0 A=0 BS=0']]),
      draw: hline(tv, 877, '#e61e14') + hline(tv, 965, '#00960f') + hline(tv, 1143, '#00960f') + hline(tv, 1232, '#e61e14') +
        candles(30, 21.72, 13, 'g 1056 1056 1056 1056,r 1057 1057 1057 1057,g 1057 1057 1057 1057,r 1059 1059 1059 1059,r 1060 1060 1060 1060,g 1060 1060 1060 1060,g 1059 1059 1059 1059,g 1058 1058 1058 1058,r 1056 1056 1062 1062,r 1055 1062 1092 1108,g 1008 1031 1092 1095,g 971 1005 1032 1043,r 995 1005 1042 1082,g 975 1008 1032 1047,r 997 1008 1036 1070,g 967 1005 1036 1047,r 978 1005 1039 1070,g 955 962 1041 1041,r 947 962 1036 1040,g 970 985 1036 1047,r 967 985 1042 1083,r 951 1041 1059 1062,g 1000 1018 1059 1078,r 984 1018 1052 1052,g 953 1008 1052 1065,r 997 1008 1107 1107,g 1062 1080 1108 1111,g 1000 1021 1081 1098,r 990 1021 1081 1081,g 1047 1063 1081 1142,r 961 1063 1063 1083,g 1004 1055 1064 1088,g 1008 1028 1052 1092,g 994 1028 1028 1043,g 975 1008 1028 1032,r 1003 1008 1025 1075,g 979 1018 1025 1052,r 990 1021 1045 1052,g 1004 1034 1045 1072,g 980 995 1035 1045,r 985 995 1035 1078,r 1027 1034 1068 1085,r 1010 1063 1084 1091,g 1047 1050 1084 1102,r 997 1050 1087 1141,g 1039 1039 1087 1128,g 1000 1024 1038 1052,g 947 988 1025 1038,g 921 948 988 1012,r 943 948 970 1030,r 931 968 1005 1005,r 990 1005 1074 1074,g 978 988 1074 1081,r 984 988 1012 1025,r 978 1012 1041 1048,g 980 998 1041 1078,r 988 998 1031 1070,g 994 1011 1032 1060,r 990 1011 1036 1060', bright) +
        hline(tv, 1054, '#fff'),
      prices: [[877, '800'], [965, '400'], [1057, '0'], [1143, '-400'], [1232, '-800']], last: [1035, '92'],
      times: [[30, '9:12'], [138, '9:22'], [246, '9:32'], [355, '9:42'], [464, '9:52'], [594, '10:04'], [725, '10:16'], [855, '10:28'], [985, '10:40'], [1116, '10:52'], [1246, '11:04']]
    });

    // ---------- order windows ----------
    const arrow = '<span class="pointer-events-none absolute top-0 right-0 bottom-0 flex w-[30px] items-center justify-center border-2 border-t-white border-l-white border-r-[#666] border-b-[#666] bg-[#e8e8e8]"><svg class="h-2 w-4" viewBox="0 0 16 8"><path d="M1 0H15L8 8Z"/></svg></span>';
    const select = (id, label, value, cls) => `<div class="relative border-2 border-t-[#666] border-l-[#666] border-r-white border-b-white bg-white ${cls}"><select id="${id}" aria-label="${label}" class="h-full w-full appearance-none bg-transparent pl-[6px] leading-8"><option>${value}</option></select>${arrow}</div>`;
    const field = (id, label, value) => `<input id="${id}" aria-label="${label}" value="${value}" class="h-[36px] w-full border-2 border-t-[#666] border-l-[#666] border-r-white border-b-white bg-white pl-[2px]">`;
    const action = (side, text) => side === 'b'
      ? `<button class="h-[75px] w-[78px] border-2 border-t-white border-l-white border-r-[#666] border-b-[#666] bg-[#96fa96] text-xl leading-7 font-bold">${text}</button>`
      : `<button class="h-[75px] w-[78px] border-2 border-t-white border-l-white border-r-[#666] border-b-[#666] bg-[#ff9691] text-xl leading-7 font-bold">${text}</button>`;

    function orderWindow(id, title, limit, active) {
      const dots = [0, 1, 2].map(i => active && i === 0
        ? '<span class="h-[22px] w-[22px] rounded-full border border-[#a02828] bg-radial from-[#ff8c82] to-[#d23a34]"></span>'
        : active
          ? '<span class="h-[22px] w-[22px] rounded-full border border-[#777] bg-linear-to-b from-[#999] to-[#ddd]"></span>'
          : '<span class="h-[22px] w-[22px] rounded-full border border-[#c4c4c4] bg-[#f4f4f4]"></span>').join('');
      return `
      <section class="flex w-[448px] flex-col bg-[#f1f1f1] shadow-xl">
        <header class="flex h-[32px] shrink-0 items-center gap-[14px] pl-3 ${active ? 'bg-linear-to-b from-[#e4e4e4] to-[#b4b4b4] text-[#444]' : 'bg-[#f4f4f4] text-[#999]'}">
          ${dots}<h2 class="pl-1 font-['DejaVu_Sans',sans-serif] text-[22px] whitespace-nowrap">${title}</h2>
        </header>
        ${select(id + '-cfg', 'Trade configuration', '1_knt pevny SL', 'mx-[2px] h-[40px] shrink-0')}
        <div class="mx-1 mt-[7px] mr-2 flex h-[36px] shrink-0 items-center border-2 border-[#9c9c9c] border-r-white border-b-white bg-[#5cd25f] pl-[2px]">Qty: 1 Target/Stops Match</div>
        <div class="flex h-[56px] shrink-0 items-end bg-[#e8e8e8] pl-1">
          <button class="h-[44px] w-[80px] border-t-2 border-r-2 border-l-2 border-t-white border-l-white border-r-[#666] bg-[#f1f1f1]">Main</button>
          <button class="h-[40px] w-[105px] border-t-2 border-r-2 border-b-2 border-t-white border-r-[#666] border-b-white">Targets</button>
          <button class="h-[40px] w-[60px] border-t-2 border-r-2 border-b-2 border-t-white border-r-[#666] border-b-white">Set</button>
          <button class="h-[40px] w-[40px] border-t-2 border-r-2 border-b-2 border-t-white border-r-[#666] border-b-white">C</button>
          <div class="flex-1 border-b-2 border-white"></div>
        </div>
        <div class="flex justify-between pt-[19px] pr-4 pl-[26px]">
          <div class="flex w-[232px] flex-col">
            <label for="${id}-pos" class="flex h-[36px] items-center">Pos Qty@Price:</label>
            <div class="flex flex-col gap-3">
              ${field(id + '-pos', 'Position', 'Flat')}
              ${field(id + '-pl', 'Profit and loss', 'P/L: 0t')}
              ${field(id + '-dpl', 'Daily profit and loss', 'DailyPL: 0t')}
              ${select(id + '-acc', 'Account', 'U1049492', 'h-[42px]')}
            </div>
          </div>
          <div class="grid grid-cols-2 gap-x-3 gap-y-[3px]">
            ${action('b', 'BUY<br>MKT')}${action('s', 'SELL<br>MKT')}
            ${action('b', 'BUY<br>ASK')}${action('s', 'SELL<br>ASK')}
            ${action('b', 'BUY<br>BID')}${action('s', 'SELL<br>BID')}
          </div>
        </div>
        <div class="mt-3 flex h-[58px] shrink-0 gap-[3px] pl-3 text-xl font-bold">
          <button class="w-[130px] border-2 border-t-white border-l-white border-r-[#666] border-b-[#666] bg-[#ff9658]"><u>F</u>latten</button>
          <button class="w-[135px] border-2 border-t-white border-l-white border-r-[#666] border-b-[#666] bg-[#ff9658]"><u>R</u>everse</button>
          <button class="w-[115px] border-2 border-t-white border-l-white border-r-[#666] border-b-[#666] bg-[#a0a0a0]"><span class="bg-[#ff9658]">Cancel<u>A</u>ll</span></button>
          <button class="w-[37px] border-2 border-t-white border-l-white border-r-[#666] border-b-[#666] bg-[#e8e8e8]">M</button>
        </div>
        <div class="mt-4 flex h-[52px] shrink-0 justify-between pr-[10px] pl-3">
          <button class="w-[79px] border-2 border-t-[#888] border-l-[#666] border-r-white border-b-white">1</button>
          ${['2', '4', '5', '8'].map(n => `<button class="w-[80px] border-2 border-t-white border-l-white border-r-[#666] border-b-[#666] bg-[#e8e8e8]">${n}</button>`).join('')}
        </div>
        <div class="mt-[25px] flex h-[30px] shrink-0 items-center pl-[31px]">
          <input type="checkbox" id="${id}-att" checked class="h-[24px] w-[24px] appearance-none border-2 border-t-[#666] border-l-[#666] border-r-white border-b-white bg-white">
          <svg class="pointer-events-none -ml-[20px] h-4 w-4" viewBox="0 0 16 16"><path d="M1 6L6 12L15 2" fill="none" stroke="#000" stroke-width="4"/></svg>
          <label for="${id}-att" class="w-[261px] pt-2 pl-[18px]">Use Attached Orders</label>
          <input type="checkbox" id="${id}-chase" class="h-[24px] w-[24px] appearance-none border-2 border-t-[#666] border-l-[#666] border-r-white border-b-white bg-white">
          <label for="${id}-chase" class="pt-2 pl-[13px]">Chase</label>
        </div>
        <div class="mx-4 mt-[11px] mr-[14px] flex flex-col border-2 border-[#999] pt-3 pr-[7px] pl-[5px] pb-[2px]">
          ${select(id + '-type', 'Order type', 'Limit', 'h-[43px]')}
          <div class="mt-2 flex items-center justify-end gap-2"><label for="${id}-lim">Limit:</label>${select(id + '-lim', 'Limit', limit, 'h-[43px] w-[244px]')}</div>
          <div class="relative mt-2 h-[43px] w-[244px] self-end border-2 border-t-[#666] border-l-[#666] border-r-white border-b-white"><select disabled aria-label="Second price" class="h-full w-full appearance-none bg-[#e8e8e8]"></select><span class="pointer-events-none absolute top-0 right-0 bottom-0 flex w-[30px] items-center justify-center border-2 border-t-white border-l-white border-r-[#999] border-b-[#999] bg-[#e8e8e8]"><svg class="h-2 w-4" viewBox="0 0 16 8"><path d="M1 0H15L8 8Z" fill="#999"/></svg></span></div>
          <div class="mt-1 flex items-center justify-end gap-2"><label for="${id}-qty"><u>Q</u>uantity:</label>${select(id + '-qty', 'Quantity', '1', 'h-[43px] w-[244px]')}</div>
          <div class="mt-2 flex items-center justify-end gap-2"><label for="${id}-tif">TimeInForce:</label>${select(id + '-tif', 'Time in force', 'Day', 'h-[43px] w-[244px]')}</div>
          <div class="ml-1 flex h-[50px] border-2 border-t-[#666] border-l-[#666] border-r-white border-b-white bg-[#e8e8e8]">
            <input disabled aria-label="Good till" value="Good till: 2014-06-10 00:00" class="min-w-0 flex-1 pb-1 pl-[6px] text-[#999]">
            <div class="flex w-[28px] flex-col gap-[2px]">
              <button aria-label="Up" class="flex flex-1 items-center justify-center border-2 border-t-white border-l-white border-r-[#666] border-b-[#666]"><svg class="h-[6px] w-3" viewBox="0 0 12 6"><path d="M0 6L6 0L12 6Z"/></svg></button>
              <button aria-label="Down" class="flex flex-1 items-center justify-center border-2 border-t-white border-l-white border-r-[#666] border-b-[#666]"><svg class="h-[6px] w-3" viewBox="0 0 12 6"><path d="M0 0L6 6L12 0Z"/></svg></button>
            </div>
          </div>
          <div class="mt-[10px] flex gap-[92px] pl-[86px]">${action('b', 'BUY')}${action('s', 'SELL')}</div>
        </div>
      </section>`;
    }
    document.getElementById('orders').innerHTML =
      orderWindow('nqo', 'NQ-201406-GLOBEX [CB] [...', '0.00', false) + orderWindow('ymo', 'YM-201406-ECBOT [CB] [...', '0', true);
  </script>
</body>
</html>
